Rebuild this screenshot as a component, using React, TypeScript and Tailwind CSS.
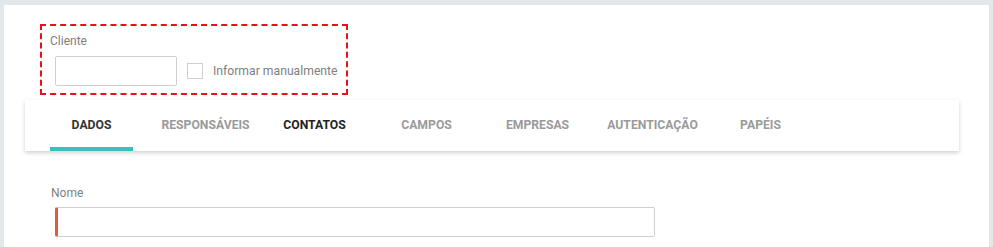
const tabs = [
    { label: 'DADOS', ml: 'ml-0', tone: 'text-[#333]', active: true },
    { label: 'RESPONSÁVEIS', ml: 'ml-[31px]', tone: 'text-[#9a9a9a]', active: false },
    { label: 'CONTATOS', ml: 'ml-[26px]', tone: 'text-[#222]', active: false },
    { label: 'CAMPOS', ml: 'ml-[29px]', tone: 'text-[#9a9a9a]', active: false },
    { label: 'EMPRESAS', ml: 'ml-[28px]', tone: 'text-[#9a9a9a]', active: false },
    { label: 'AUTENTICAÇÃO', ml: 'ml-[32px]', tone: 'text-[#9a9a9a]', active: false },
    { label: 'PAPÉIS', ml: 'ml-[25px]', tone: 'text-[#9a9a9a]', active: false },
];

export default function App() {
    return (
        <div className="h-[247px] overflow-hidden bg-[#e2e7ea] pl-[4px] pr-[4px] pt-[5px] font-['Roboto',sans-serif]">
            <div className="h-[300px] bg-white pt-[19px]">
                {/* cliente */}
                <div className="ml-[36px] h-[71px] w-[308px] border-2 border-dashed border-[#e8101a]">
                    <div className="ml-[8px] mt-[8px] text-[12px] leading-[14px] text-[#808080]">Cliente</div>
                    <div className="mt-[8px] flex items-center">
                        <div className="ml-[13px] h-[30px] w-[122px] rounded-[2px] border border-[#cfcfcf]" />
                        <div className="ml-[10px] h-[16px] w-[16px] border border-[#cfcfcf]" />
                        <span className="ml-[10px] text-[12.2px] text-[#7f7f7f]">Informar manualmente</span>
                    </div>
                </div>

                {/* abas */}
                <div className="ml-[21px] mt-[5px] h-[51px] w-[934px] bg-white pl-[25px] shadow-[0_2px_4px_rgba(0,0,0,0.18)]">
                    <div className="flex h-full">
                        {tabs.map((tab) => (
                            <div
                                key={tab.label}
                                className={`${tab.ml} relative flex h-full w-[83px] shrink-0 items-center justify-center whitespace-nowrap text-[12.2px] font-bold ${tab.tone}`}
                            >
                                {tab.label}
                                {tab.active && <div className="absolute bottom-0 left-0 h-[4px] w-full bg-[#3abfc0]" />}
                            </div>
                        ))}
                    </div>
                </div>

                {/* nome */}
                <div className="ml-[47px] mt-[35px] text-[12px] leading-[14px] text-[#808080]">Nome</div>
                <div className="ml-[51px] mt-[7px] h-[30px] w-[600px] rounded-[2px] border border-l-[3px] border-[#cfcfcf] border-l-[#d5603d]" />
            </div>
        </div>
    );
}
